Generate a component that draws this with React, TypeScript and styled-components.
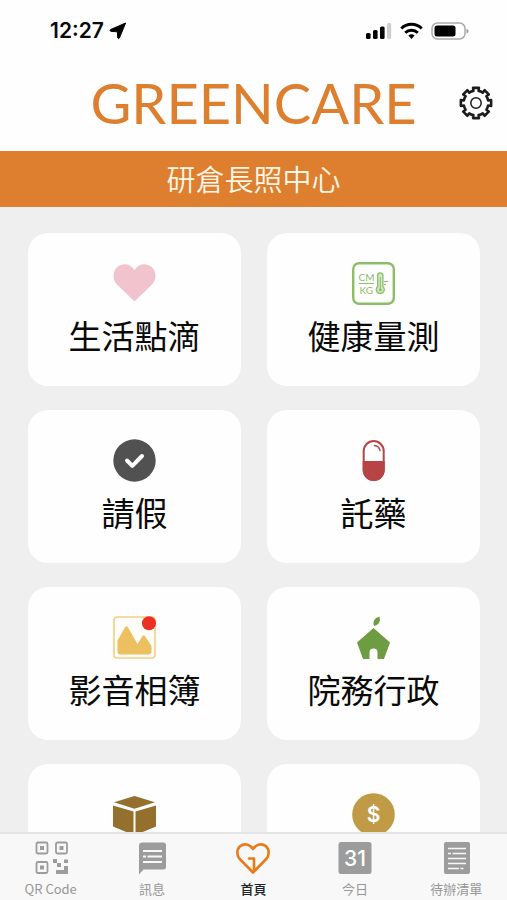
import React from "react";
import styled, { createGlobalStyle } from "styled-components";

const GlobalStyle = createGlobalStyle`
  *, *::before, *::after { box-sizing: border-box; }
  body { margin: 0; background: #efeff0; }
`;

const cjk = `"Noto Sans CJK TC", "Noto Sans", sans-serif`;

const Screen = styled.div`
  display: flex;
  flex-direction: column;
  height: 100vh;
  background: #efeff0;
  font-family: ${cjk};
  color: #0a0a0a;
`;

const StatusBar = styled.div`
  flex: none;
  display: flex;
  align-items: center;
  justify-content: space-between;
  height: 62px;
  padding: 0 38px 0 50px;
  background: #fefefe;
`;

const StatusGroup = styled.div<{ $gap: number }>`
  display: flex;
  align-items: center;
  gap: ${(p) => p.$gap}px;
`;

const Clock = styled.span`
  font: 600 21px/24px Inter, sans-serif;
`;

const Header = styled.header`
  flex: none;
  display: grid;
  grid-template-columns: 1fr auto 1fr;
  align-items: center;
  height: 89px;
  padding: 0 14px 7px;
  background: #fefefe;
`;

const Brand = styled.h1`
  grid-column: 2;
  margin: 0;
  font: 400 56px/80px Lato, sans-serif;
  color: #dd7f2f;
`;

const SettingsButton = styled.button`
  justify-self: end;
  display: flex;
  padding: 0;
  border: 0;
  background: none;
  cursor: pointer;
`;

const Banner = styled.h2`
  flex: none;
  margin: 0;
  padding: 7px 0 9px;
  background: #dd7f2f;
  color: #fff6e6;
  font-size: 29px;
  font-weight: 350;
  line-height: 40px;
  text-align: center;
`;

const Content = styled.main`
  flex: 1;
  min-height: 0;
  overflow-y: auto;
  scrollbar-width: none;
  padding: 26px 27px 26px 28px;
`;

const Grid = styled.div`
  display: grid;
  grid-template-columns: 1fr 1fr;
  grid-auto-rows: 153px;
  gap: 24px 26px;
`;

const Card = styled.button`
  display: flex;
  flex-direction: column;
  align-items: center;
  gap: 6px;
  padding: 29px 0 0;
  border: 0;
  border-radius: 20px;
  background: #fefefe;
  color: inherit;
  font-family: inherit;
  cursor: pointer;
`;

const CardLabel = styled.span`
  font-size: 33px;
  line-height: 48px;
`;

const TabBar = styled.nav`
  flex: none;
  display: grid;
  grid-template-columns: repeat(5, 1fr);
  height: 68px;
  border-top: 2px solid #e4e4e5;
  background: #f8f8f8;
`;

const Tab = styled.a<{ $active?: boolean }>`
  display: flex;
  flex-direction: column;
  align-items: center;
  gap: 3px;
  padding-top: 6px;
  color: ${(p) => (p.$active ? "#222" : "#979797")};
  font-size: 13px;
  font-weight: ${(p) => (p.$active ? 500 : 400)};
  line-height: 20px;
  text-decoration: none;
`;

const LocationIcon = () => (
  <svg width="18" height="18" viewBox="0 0 18 18" aria-hidden="true">
    <path d="M16.600 1 1.500 7.600Q.5 8.600 1.700 9.300L8.300 9.800 8.800 16Q9.600 17.300 10.400 16Z" fill="#000" stroke="#000" strokeLinejoin="round" />
  </svg>
);

const SignalIcon = () => (
  <svg width="27" height="18" viewBox="0 0 27 18" aria-hidden="true">
    <rect x="1" y="11" width="4.600" height="6" rx="1.500" />
    <rect x="8" y="8" width="4.600" height="9" rx="1.500" />
    <rect x="15" y="4.500" width="4.600" height="12.500" rx="1.500" />
    <rect x="22" y="1" width="4.200" height="16" rx="1.500" fill="#cfcfcf" />
  </svg>
);

const WifiIcon = () => (
  <svg width="23" height="18" viewBox="0 0 23 18" fill="none" stroke="#000" strokeWidth="3" aria-hidden="true">
    <path d="M1.300 6.500a14.500 14.500 0 0 1 20.400 0M5.200 10.800a9 9 0 0 1 12.600 0" />
    <path d="M8.400 13.600a4.500 4.500 0 0 1 6.200 0L11.500 16.900Z" fill="#000" stroke="none" />
  </svg>
);

const BatteryIcon = () => (
  <svg width="38" height="18" viewBox="0 0 38 18" aria-hidden="true">
    <rect x="1" y="1" width="33" height="16" rx="5.500" fill="#fff" stroke="#ababab" strokeWidth="1.500" />
    <rect x="3.500" y="3.500" width="21" height="11" rx="2.500" />
    <path d="M35.500 6.500q2 1 2 2.500t-2 2.500z" fill="#999" />
  </svg>
);

const TEETH = [0, 45, 90, 135, 180, 225, 270, 315];

const gearPath = TEETH.map((deg) => {
  const point = (offset: number, r: number) => {
    const a = ((deg + offset - 90) * Math.PI) / 180;
    return `${(17 + r * Math.cos(a)).toFixed(2)} ${(17 + r * Math.sin(a)).toFixed(2)}`;
  };
  return `${deg === 0 ? "M" : "L"}${point(-12, 12.4)}L${point(-11, 15.4)}L${point(11, 15.4)}L${point(12, 12.4)}A12.400 12.400 0 0 1 ${point(33, 12.4)}`;
}).join("");

const GearIcon = () => (
  <svg width="34" height="34" viewBox="0 0 34 34" fill="none" stroke="#1c1c1c" aria-hidden="true">
    <path d={gearPath + "Z"} strokeWidth="2.600" strokeLinejoin="round" />
    <circle cx="17" cy="17" r="5.200" strokeWidth="1.500" />
  </svg>
);

const CardSvg = ({ children }: { children: React.ReactNode }) => (
  <svg width="43" height="43" viewBox="0 0 43 43" aria-hidden="true">
    {children}
  </svg>
);

const HeartIcon = () => (
  <CardSvg>
    <path d="M21.500 39.500 3.600 22C-1.200 17 0 8.500 4.500 4.800 10 .5 17.500 1.500 21.500 8 25.500 1.500 33 .5 38.500 4.800 43 8.500 44.200 17 39.400 22Z" fill="#f0c3cd" />
  </CardSvg>
);

const MeasureIcon = () => (
  <CardSvg>
    <rect x="1.200" y="1.200" width="40.600" height="40.600" rx="6" fill="none" stroke="#8bbe66" strokeWidth="2.400" />
    <g fill="#8bbe66" fontFamily="Lato, sans-serif" fontSize="10">
      <text x="6.500" y="19">CM</text>
      <text x="7.500" y="32">KG</text>
    </g>
    <path d="M7 21.500h15M32 19.500h4M32 22.500h2" stroke="#8bbe66" strokeWidth="1.200" />
    <path d="M25.700 24.500V13.500a2.600 2.600 0 0 1 5.200 0v11a4 4 0 1 1-5.200 0Z" fill="#d3e8c5" stroke="#8bbe66" strokeWidth="1.300" />
    <path d="M28.300 15v12" stroke="#8bbe66" strokeWidth="1" />
    <circle cx="28.300" cy="27.700" r="1.500" fill="#8bbe66" />
  </CardSvg>
);

const CheckIcon = () => (
  <CardSvg>
    <circle cx="21.500" cy="21.500" r="21.200" fill="#515151" />
    <path d="m14 21.500 5.300 5.300L29 17" fill="none" stroke="#fff" strokeWidth="4" strokeLinecap="round" strokeLinejoin="round" />
  </CardSvg>
);

const PillIcon = () => (
  <CardSvg>
    <rect x="11.700" y="2" width="20" height="39" rx="10" fill="#fff" stroke="#b84345" strokeWidth="2" />
    <path d="M10.700 22h22v9a11 11 0 0 1-22 0Z" fill="#b84345" />
    <path d="M22.500 6.500q4.500.5 5.500 5" fill="none" stroke="#b84345" strokeWidth="1.400" strokeLinecap="round" />
  </CardSvg>
);

const AlbumIcon = () => (
  <CardSvg>
    <rect x="1" y="1" width="41" height="41" rx="3" fill="#fffdf8" stroke="#f2cf84" strokeWidth="1.600" />
    <path d="M4.500 24.500 12 11.500q1.500-2.500 3 0L24.500 28l5-8q1.200-1.500 2.400 0L38.500 30v5.500q0 3-3 3h-28q-3 0-3-3Z" fill="#edc05f" />
    <circle cx="36" cy="7.300" r="7" fill="#ea3023" />
  </CardSvg>
);

const HouseIcon = () => (
  <CardSvg>
    <path d="m21.500 12 16.500 14.500-6 16.500h-6.500v-6.500a4 4 0 0 0-8 0V43H11L5 26.500Z" fill="#6e9c42" />
    <path d="M27.500.5Q29.500 8 22 10 19.500 3 27.500.5Z" fill="#6e9c42" />
  </CardSvg>
);

const BoxIcon = () => (
  <CardSvg>
    <path d="M21.500 3 42 9.300 21.500 15.700 1 9.300Z" fill="#946f2d" />
    <path d="M0 12.500 20.500 18.500V42L0 33.500ZM43 12.500 22.500 18.500V42L43 33.500Z" fill="#946f2d" />
  </CardSvg>
);

const CoinIcon = () => (
  <CardSvg>
    <circle cx="21.500" cy="21.500" r="21.300" fill="#c09a44" />
    <text x="21.500" y="29" textAnchor="middle" fontFamily="Inter, sans-serif" fontSize="21" fontWeight="600" fill="#fff">
      $
    </text>
  </CardSvg>
);

const TabSvg = ({ children }: { children: React.ReactNode }) => (
  <svg width="36" height="36" viewBox="0 0 36 36" fill="#9c9c9c" aria-hidden="true">
    {children}
  </svg>
);

const QrIcon = () => (
  <TabSvg>
    <g fill="none" stroke="#9c9c9c" strokeWidth="1.800">
      <rect x="3.500" y="2.500" width="11" height="11" rx="1.500" />
      <rect x="23" y="2.500" width="11" height="11" rx="1.500" />
      <rect x="3.500" y="22" width="11" height="11" rx="1.500" />
    </g>
    <path d="M7 6h4v4H7zM26.500 6h4v4h-4zM7 25.500h4v4H7zM20 19h4v4h-4zM24 23h4v4h-4zM31 19.500h4v3.500h-4zM31 26h4v8H23v-4h8z" />
  </TabSvg>
);

const MessageIcon = () => (
  <TabSvg>
    <path d="M8.500 2.500h21q2.500 0 2.500 2.500v22q0 2.500-2.500 2.500H9.500L5 34.500V5.500q0-3 3.500-3Z" />
    <path d="M9 11h19M9 16.500h3M13.500 16.500H28M9 22h19" stroke="#f8f8f8" strokeWidth="1.800" />
  </TabSvg>
);

const HomeIcon = () => (
  <TabSvg>
    <path
      d="M18 32.500 4.800 19C1.500 15.500 1.500 9.500 5 6.300 9 3 14.500 4 18 9 21.500 4 27 3 31 6.300c3.500 3.200 3.500 9.200.2 12.700L22 28.500 18 32.500M14 18.500h5V31"
      fill="none"
      stroke="#e67b17"
      strokeWidth="2.600"
      strokeLinejoin="round"
      strokeLinecap="round"
    />
  </TabSvg>
);

const CalendarIcon = () => (
  <TabSvg>
    <rect x="1.500" y="2" width="33" height="32" rx="2.500" />
    <text x="18" y="26" textAnchor="middle" fontFamily="Inter, sans-serif" fontSize="21" fontWeight="500" fill="#fff">
      31
    </text>
  </TabSvg>
);

const ListIcon = () => (
  <TabSvg>
    <rect x="6" y="2" width="26" height="32" rx="2" />
    <path d="M10 8.500h18M10 13.500h3M14.500 13.500H28M10 18.500h18M10 23.500h18M10 28.500h11M22.500 28.500h3" stroke="#f8f8f8" strokeWidth="1.700" />
  </TabSvg>
);

const cards = [
  { icon: <HeartIcon />, label: "生活點滴" },
  { icon: <MeasureIcon />, label: "健康量測" },
  { icon: <CheckIcon />, label: "請假" },
  { icon: <PillIcon />, label: "託藥" },
  { icon: <AlbumIcon />, label: "影音相簿" },
  { icon: <HouseIcon />, label: "院務行政" },
  { icon: <BoxIcon />, name: "包裹" },
  { icon: <CoinIcon />, name: "費用" },
];

const tabs = [
  { icon: <QrIcon />, label: "QR Code", href: "#qr" },
  { icon: <MessageIcon />, label: "訊息", href: "#messages" },
  { icon: <HomeIcon />, label: "首頁", href: "#home", active: true },
  { icon: <CalendarIcon />, label: "今日", href: "#today" },
  { icon: <ListIcon />, label: "待辦清單", href: "#todo" },
];

export default function App() {
  return (
    <Screen>
      <GlobalStyle />
      <StatusBar>
        <StatusGroup $gap={5}>
          <Clock>12:27</Clock>
          <LocationIcon />
        </StatusGroup>
        <StatusGroup $gap={8}>
          <SignalIcon />
          <WifiIcon />
          <BatteryIcon />
        </StatusGroup>
      </StatusBar>
      <Header>
        <Brand>GREENCARE</Brand>
        <SettingsButton type="button" aria-label="設定">
          <GearIcon />
        </SettingsButton>
      </Header>
      <Banner>研倉長照中心</Banner>
      <Content>
        <Grid>
          {cards.map((card, i) => (
            <Card key={i} type="button" aria-label={card.name}>
              {card.icon}
              {card.label && <CardLabel>{card.label}</CardLabel>}
            </Card>
          ))}
        </Grid>
      </Content>
      <TabBar>
        {tabs.map((tab) => (
          <Tab key={tab.href} href={tab.href} $active={tab.active} aria-current={tab.active ? "page" : undefined}>
            {tab.icon}
            {tab.label}
          </Tab>
        ))}
      </TabBar>
    </Screen>
  );
}
